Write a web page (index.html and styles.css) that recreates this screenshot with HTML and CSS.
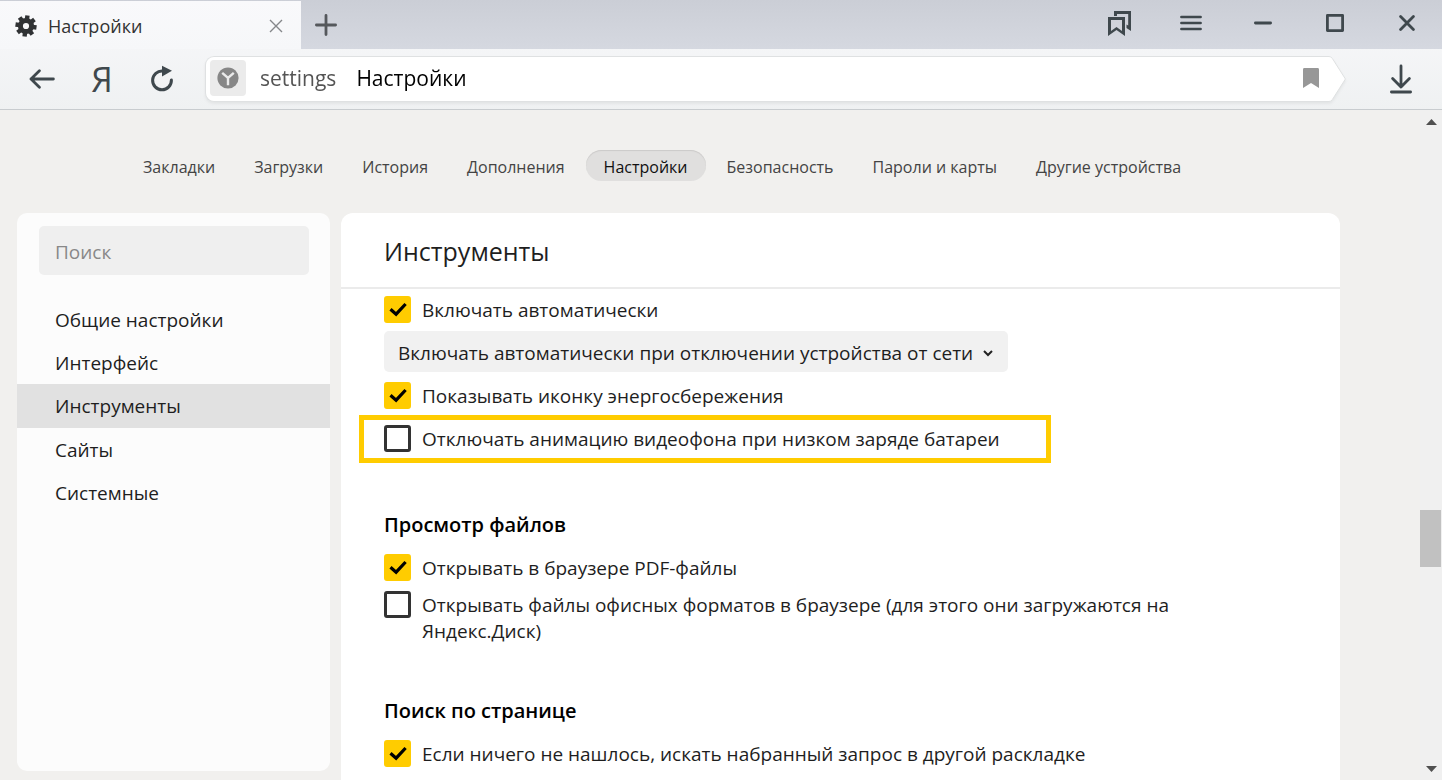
FILE: index.html
```html
<!DOCTYPE html>
<html lang="ru">
<head>
<meta charset="utf-8">
<title>Настройки</title>
<meta name="viewport" content="width=device-width, initial-scale=1">
<link rel="stylesheet" href="styles.css">
</head>
<body>
<header class="chrome">
  <div class="tab-strip">
    <div class="tab">
      <svg class="tab-gear" viewBox="0 0 22 22" width="22" height="22" aria-hidden="true">
        <circle cx="11" cy="11" r="5.6" fill="none" stroke="#303234" stroke-width="5"/>
        <g stroke="#303234" stroke-width="4.4">
          <path d="M11 .4V5M11 17v4.6M.4 11H5M17 11h4.6M3.5 3.5l3.2 3.2M15.3 15.3l3.2 3.2M18.5 3.5l-3.2 3.2M6.7 15.3l-3.2 3.2" transform="rotate(8 11 11)"/>
        </g>
      </svg>
      <span class="tab-title">Настройки</span>
      <button class="icon-button tab-close" aria-label="Закрыть вкладку">
        <svg viewBox="0 0 14 14" width="14" height="14"><path d="M1 1l12 12M13 1L1 13" stroke="#85878a" stroke-width="1.4"/></svg>
      </button>
    </div>
    <button class="icon-button new-tab" aria-label="Новая вкладка">
      <svg viewBox="0 0 22 22" width="22" height="22"><path d="M11 1.400v19.200M1.400 11h19.200" stroke="#55585c" stroke-width="2.8" stroke-linecap="round"/></svg>
    </button>
    <div class="window-buttons">
      <button class="icon-button" aria-label="Закладки">
        <svg viewBox="0 0 23 25" width="23" height="25" fill="#3f484d" fill-rule="evenodd"><path d="M6 0h17v20l-4.500-3v-3.500l1.700 1V3H9v2H6z"/><path d="M0 6h17v19l-8.500-6L0 25zM3 9v11l5.500-4 5.500 4V9z"/></svg>
      </button>
      <button class="icon-button" aria-label="Меню">
        <svg viewBox="0 0 22 16" width="22" height="16"><path d="M1.4 2h19.2M1.4 8h19.2M1.4 14h19.2" stroke="#3f484d" stroke-width="2.6" stroke-linecap="round"/></svg>
      </button>
      <button class="icon-button" aria-label="Свернуть">
        <svg viewBox="0 0 18 18" width="18" height="18"><path d="M1.4 9h15.2" stroke="#3f484d" stroke-width="2.8" stroke-linecap="round"/></svg>
      </button>
      <button class="icon-button" aria-label="Развернуть">
        <svg viewBox="0 0 18 18" width="18" height="18"><rect x="1.4" y="1.4" width="15.2" height="15.2" fill="none" stroke="#3f484d" stroke-width="2.8" stroke-linejoin="round"/></svg>
      </button>
      <button class="icon-button" aria-label="Закрыть">
        <svg viewBox="0 0 16 16" width="16" height="16"><path d="M1.6 1.6l12.8 12.8M14.4 1.6L1.6 14.4" stroke="#3f484d" stroke-width="2.8" stroke-linecap="round"/></svg>
      </button>
    </div>
  </div>
  <div class="toolbar">
    <button class="icon-button" aria-label="Назад">
      <svg viewBox="0 0 26 20" width="26" height="20" fill="none" stroke="#3f484d" stroke-width="2.8" stroke-linecap="round" stroke-linejoin="round"><path d="M24.4 10H2M10.4 1.8L2 10l8.4 8.2"/></svg>
    </button>
    <button class="icon-button ya" aria-label="Яндекс">Я</button>
    <button class="icon-button" aria-label="Обновить">
      <svg viewBox="0 0 24 28" width="24" height="28"><path d="M12.800 6A9.400 9.400 0 1 0 21.400 15" fill="none" stroke="#3f484d" stroke-width="3" stroke-linecap="round"/><path d="M12 .8l10 5-10 5.8z" fill="#3f484d"/></svg>
    </button>
    <div class="address">
      <div class="address-body">
        <button class="icon-button site" aria-label="О сайте">
          <svg viewBox="0 0 22 22" width="22" height="22"><circle cx="11" cy="11" r="10.6" fill="#878787"/><path d="M5.2 5.8L11 11l5.8-5.2M11 11v7.2" fill="none" stroke="#ebebeb" stroke-width="2.4"/></svg>
        </button>
        <span class="host">settings</span>
        <span class="page-name">Настройки</span>
        <button class="icon-button bookmark" aria-label="Добавить в закладки">
          <svg viewBox="0 0 16 20" width="16" height="20"><path d="M0 1.4Q0 0 1.4 0h13.2Q16 0 16 1.4V20l-8-5-8 5z" fill="#979797"/></svg>
        </button>
      </div>
      <svg class="address-cap" viewBox="0 0 18 46" width="18" height="46" aria-hidden="true"><path d="M0 .5h1q2 0 3.4 2L17.4 23 4.400 43.500q-1.400 2-3.400 2H0" fill="#fff" stroke="#dfe1e2"/></svg>
    </div>
    <button class="icon-button downloads" aria-label="Загрузки">
      <svg viewBox="0 0 22 30" width="22" height="30" fill="none" stroke="#3f484d" stroke-width="2.8" stroke-linecap="round" stroke-linejoin="round"><path d="M11 2v21M2.600 14.400L11 23l8.400-8.600M1.400 28h19.200"/></svg>
    </button>
  </div>
</header>

<div class="page">
  <div class="content">
    <nav class="sections" aria-label="Разделы">
      <a href="#bookmarks">Закладки</a>
      <a href="#downloads">Загрузки</a>
      <a href="#history">История</a>
      <a href="#addons">Дополнения</a>
      <a href="#settings" class="current" aria-current="page">Настройки</a>
      <a href="#security">Безопасность</a>
      <a href="#passwords">Пароли и карты</a>
      <a href="#devices">Другие устройства</a>
    </nav>
    <div class="columns">
      <aside class="sidebar">
        <input class="search" type="search" placeholder="Поиск" aria-label="Поиск">
        <nav class="menu" aria-label="Настройки">
          <a href="#general">Общие настройки</a>
          <a href="#interface">Интерфейс</a>
          <a href="#tools" class="current" aria-current="true">Инструменты</a>
          <a href="#sites">Сайты</a>
          <a href="#system">Системные</a>
        </nav>
      </aside>
      <main class="panel">
        <h1 class="panel-title">Инструменты</h1>
        <div class="panel-body">
          <section class="group">
            <label class="option"><input type="checkbox" checked><span>Включать автоматически</span></label>
            <div class="picker">
              <select aria-label="Когда включать">
                <option>Включать автоматически при отключении устройства от сети</option>
              </select>
              <svg class="picker-arrow" viewBox="0 0 12 8" width="12" height="8" aria-hidden="true"><path d="M2 2l4 4 4-4" fill="none" stroke="#222" stroke-width="2"/></svg>
            </div>
            <label class="option"><input type="checkbox" checked><span>Показывать иконку энергосбережения</span></label>
            <label class="option highlighted"><input type="checkbox"><span>Отключать анимацию видеофона при низком заряде батареи</span></label>
          </section>
          <section class="group">
            <h2>Просмотр файлов</h2>
            <label class="option"><input type="checkbox" checked><span>Открывать в браузере PDF-файлы</span></label>
            <label class="option"><input type="checkbox"><span>Открывать файлы офисных форматов в браузере (для этого они загружаются на Яндекс.Диск)</span></label>
          </section>
          <section class="group">
            <h2>Поиск по странице</h2>
            <label class="option"><input type="checkbox" checked><span>Если ничего не нашлось, искать набранный запрос в другой раскладке</span></label>
          </section>
        </div>
      </main>
    </div>
  </div>
  <div class="scrollbar" aria-hidden="true">
    <svg viewBox="0 0 11 6" width="11" height="6"><path d="M0 6L5.500 0 11 6z" fill="#505050"/></svg>
    <div class="track"><div class="thumb"></div></div>
    <svg viewBox="0 0 11 6" width="11" height="6"><path d="M0 0l5.500 6L11 0z" fill="#505050"/></svg>
  </div>
</div>
</body>
</html>
```

FILE: styles.css
```css
* { box-sizing: border-box; }

body {
  margin: 0;
  height: 100vh;
  display: flex;
  flex-direction: column;
  overflow: hidden;
  background: #f1f0ee;
  color: #1e1e1e;
  font: 19px/26px "Open Sans", "Noto Sans", sans-serif;
}

a { color: inherit; text-decoration: none; }

button, input, select { font: inherit; color: inherit; }

.icon-button {
  display: flex;
  align-items: center;
  justify-content: center;
  flex: none;
  padding: 0;
  border: 0;
  background: none;
}

/* Browser chrome */
.chrome {
  flex: none;
  border-bottom: 1px solid #c8cccf;
  background: linear-gradient(#f9f9fb, #eff1f2);
}

.tab-strip {
  display: flex;
  height: 49px;
  background: linear-gradient(#cbced6, #d5d8e0);
}

.tab {
  display: flex;
  align-items: center;
  width: 301px;
  margin-top: 1px;
  padding: 2px 18px 0 15px;
  background: linear-gradient(#f9f9fb, #f6f7f9);
}

.tab-title {
  flex: 1;
  margin-left: 11px;
  color: #333;
  font-size: 18px;
}

.new-tab { width: 50px; }

.window-buttons {
  display: flex;
  margin: 0 -1px 0 auto;
  padding-bottom: 3px;
}

.window-buttons .icon-button { width: 72px; }

.toolbar {
  display: flex;
  align-items: center;
  height: 60px;
  padding: 0 5px 0 12px;
}

.toolbar > .icon-button { width: 60px; height: 48px; }

.toolbar .downloads { width: 72px; margin-left: 19px; }

.toolbar .ya {
  color: #3f484d;
  font: 34px/48px "Liberation Sans Narrow", "Open Sans", sans-serif;
}

.address {
  display: flex;
  flex: 1;
  height: 46px;
  margin-left: 13px;
  filter: drop-shadow(0 2px 1px #e3e5e6);
}

.address-body {
  display: flex;
  align-items: center;
  flex: 1;
  padding: 0 0 2px 4px;
  border: 1px solid #dfe1e2;
  border-right: 0;
  border-radius: 9px 0 0 9px;
  background: #fff;
  font-size: 21px;
}

.address-cap { flex: none; }

.site {
  width: 36px;
  height: 36px;
  border-radius: 4px;
  background: #ebebeb;
}

.host { margin-left: 14px; color: #555; }

.page-name { margin-left: 20px; color: #000; }

.bookmark { margin-left: auto; padding-right: 9px; }

/* Page */
.page { display: flex; flex: 1; min-height: 0; }

.content {
  display: flex;
  flex-direction: column;
  flex: 1;
  min-width: 0;
  padding: 40px 80px 0 17px;
}

.sections {
  display: flex;
  gap: 3px;
  margin-left: 108px;
  color: #444;
  font-size: 16px;
  line-height: 27px;
  white-space: nowrap;
}

.sections a { padding: 4px 18px 0; border-radius: 16px; }

.sections .current {
  background: #e0dfde;
  box-shadow: inset 0 1px 1px #cbcac9;
  color: #111;
}

.columns {
  display: flex;
  gap: 11px;
  flex: 1;
  min-height: 0;
  margin-top: 32px;
}

.sidebar {
  flex: none;
  width: 313px;
  margin-bottom: 9px;
  padding-top: 13px;
  border-radius: 10px;
  background: #fcfcfc;
}

.search {
  display: block;
  width: 270px;
  height: 49px;
  margin: 0 22px;
  padding: 2px 16px 0;
  border: 0;
  border-radius: 5px;
  background: #efefef;
}

.search::placeholder { color: #888; }

.menu {
  display: flex;
  flex-direction: column;
  margin-top: 23px;
}

.menu a { padding: 9px 38px 8px; }

.menu .current { padding-bottom: 9px; background: #e1e1e1; }

.panel {
  display: flex;
  flex-direction: column;
  flex: 1;
  min-width: 0;
  overflow: hidden;
  border-radius: 12px 12px 0 0;
  background: #fff;
}

.panel-title {
  flex: none;
  margin: 0;
  padding: 21px 43px 19px;
  border-bottom: 2px solid #ebebeb;
  font-size: 25px;
  font-weight: 400;
  line-height: 34px;
}

.panel-body { padding: 7px 43px; }

.group {
  display: flex;
  flex-direction: column;
  align-items: flex-start;
  gap: 10px;
  margin-bottom: 52px;
}

.group h2 {
  margin: 0 0 4px;
  color: #000;
  font-size: 20px;
  font-weight: 600;
  line-height: 30px;
}

.option { display: flex; gap: 11px; max-width: 820px; }

.option span { padding-top: 1px; }

.option input {
  appearance: none;
  flex: none;
  width: 27px;
  height: 27px;
  margin: 0;
  border: 3px solid #333;
  border-radius: 3px;
  background: #fff;
}

.option input:checked {
  border-color: #fc0;
  background: #fc0 url("data:image/svg+xml,%3Csvg xmlns='http://www.w3.org/2000/svg' viewBox='0 0 21 21'%3E%3Cpath d='M3.500 10.200l5.600 5L18.600 5' fill='none' stroke='%23000' stroke-width='3.200'/%3E%3C/svg%3E") center / 21px no-repeat;
}

.highlighted {
  margin: -4px 0 -5px -25px;
  padding: 5px 46px 6px 20px;
  border: 5px solid #fc0;
}

.picker { position: relative; margin-top: -2px; }

.picker select {
  appearance: none;
  display: block;
  height: 41px;
  padding: 2px 34px 0 14px;
  border: 0;
  border-radius: 5px;
  background: #f1f1f1;
}

.picker-arrow {
  position: absolute;
  top: 18px;
  right: 14px;
  pointer-events: none;
}

/* Scrollbar */
.scrollbar {
  display: flex;
  flex-direction: column;
  align-items: center;
  flex: none;
  width: 22px;
  padding: 9px 0 8px;
  background: #f0f0f0;
}

.track { flex: 1; width: 100%; }

.thumb {
  width: 21px;
  height: 57px;
  margin-top: 385px;
  background: #c1c1c1;
}
```
